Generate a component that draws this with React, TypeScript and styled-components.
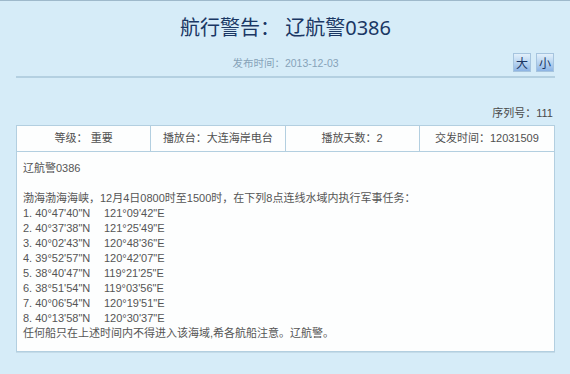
import React from 'react';
import styled, { createGlobalStyle } from 'styled-components';

const GlobalStyle = createGlobalStyle`
  html, body {
    margin: 0;
    padding: 0;
    background: #d6ecf8;
  }
  body {
    font-family: "Liberation Sans", "Noto Sans CJK SC", sans-serif;
  }
`;

const Page = styled.div`
  min-height: 373px;
  border-top: 1px solid #9eb9cb;
  padding: 0 15px 0 16px;
  background: #d6ecf8;
`;

const Title = styled.h1`
  margin: 0;
  padding-top: 15px;
  font-family: "Noto Sans", "Noto Sans CJK SC", sans-serif;
  font-size: 20px;
  line-height: 24px;
  font-weight: normal;
  color: #1a3764;
  text-align: center;
`;

const MetaBar = styled.div`
  display: grid;
  grid-template-columns: 1fr auto 1fr;
  margin-top: 13px;
  padding-bottom: 3px;
  border-bottom: 2px solid #b4d0e1;
`;

const PublishDate = styled.div`
  grid-column: 2;
  font-size: 10.5px;
  line-height: 20px;
  color: #87a3b8;
`;

const SizeTools = styled.div`
  grid-column: 3;
  justify-self: end;
  display: flex;
  gap: 5px;
  padding-right: 1px;
`;

const SizeButton = styled.button`
  width: 18px;
  height: 19px;
  padding: 0;
  border: 1px solid #a6c4de;
  background: linear-gradient(to bottom, #e2f0fb 0%, #b9d5f1 50%, #8db4e4 100%);
  color: #1b3563;
  font-family: "Noto Sans CJK SC", sans-serif;
  font-size: 12px;
  line-height: 16px;
  cursor: pointer;
`;

const Serial = styled.div`
  margin-top: 28px;
  text-align: right;
  font-size: 11px;
  line-height: 15px;
  color: #4a4a4a;
  padding-right: 2px;
`;

const NoticeTable = styled.div`
  margin-top: 4px;
  background: #fdfefe;
  border: 1px solid #b3cfe0;
  box-shadow: 0 1px 0 #c4dbe8;
`;

const InfoRow = styled.div`
  display: grid;
  grid-template-columns: repeat(4, 1fr);
  border-bottom: 1px solid #b3cfe0;
`;

const InfoCell = styled.div<{ $last?: boolean }>`
  height: 25px;
  line-height: 25px;
  text-align: center;
  font-size: 11px;
  color: #505050;
  border-right: ${p => (p.$last ? 'none' : '1px solid #b3cfe0')};
`;

const Content = styled.div`
  padding: 9px 5px 10px 6px;
  font-size: 11px;
  line-height: 15px;
  color: #555;
`;

const Line = styled.div`
  min-height: 15px;
  white-space: pre;
`;

const Coord = styled.span`
  display: inline-block;
  width: 81px;
`;

const points: [string, string][] = [
  [`40°47'40"N`, `121°09'42"E`],
  [`40°37'38"N`, `121°25'49"E`],
  [`40°02'43"N`, `120°48'36"E`],
  [`39°52'57"N`, `120°42'07"E`],
  [`38°40'47"N`, `119°21'25"E`],
  [`38°51'54"N`, `119°03'56"E`],
  [`40°06'54"N`, `120°19'51"E`],
  [`40°13'58"N`, `120°30'37"E`],
];

export default function App() {
  return (
    <>
      <GlobalStyle />
      <Page>
        <Title>航行警告： 辽航警0386</Title>
        <MetaBar>
          <PublishDate>发布时间：2013-12-03</PublishDate>
          <SizeTools>
            <SizeButton>大</SizeButton>
            <SizeButton>小</SizeButton>
          </SizeTools>
        </MetaBar>

        <Serial>序列号：111</Serial>

        <NoticeTable>
          <InfoRow>
            <InfoCell>等级： 重要</InfoCell>
            <InfoCell>播放台：大连海岸电台</InfoCell>
            <InfoCell>播放天数：2</InfoCell>
            <InfoCell $last>交发时间：12031509</InfoCell>
          </InfoRow>
          <Content>
            <Line>辽航警0386</Line>
            <Line> </Line>
            <Line>渤海渤海海峡，12月4日0800时至1500时，在下列8点连线水域内执行军事任务：</Line>
            {points.map(([lat, lon], i) => (
              <Line key={i}>
                <Coord>{`${i + 1}. ${lat}`}</Coord>
                {lon}
              </Line>
            ))}
            <Line>任何船只在上述时间内不得进入该海域,希各航船注意。辽航警。</Line>
          </Content>
        </NoticeTable>
      </Page>
    </>
  );
}
